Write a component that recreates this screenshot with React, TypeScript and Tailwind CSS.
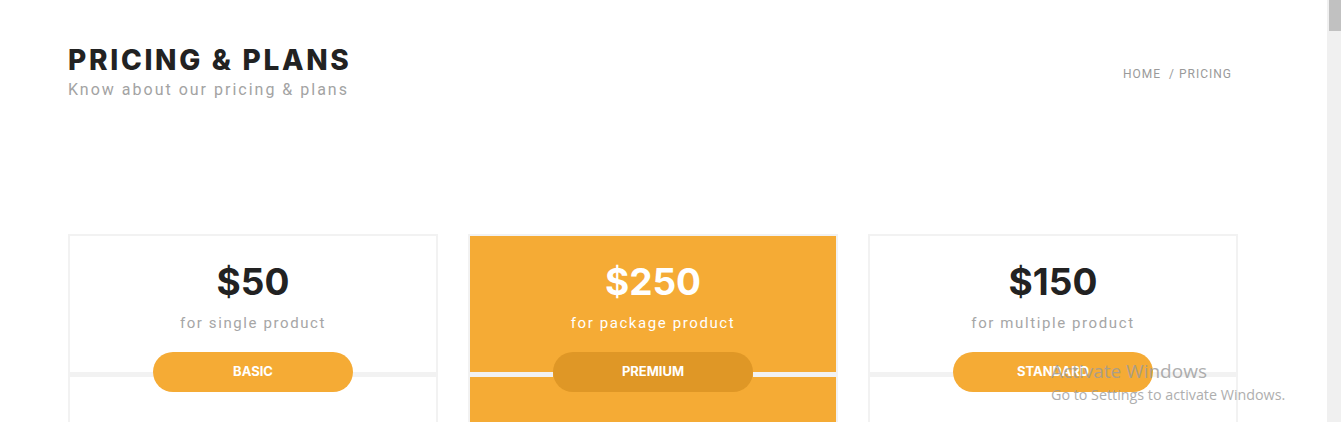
import React from "react";

const heading = { fontFamily: "Inter, 'Liberation Sans', sans-serif" };
const body = { fontFamily: "Roboto, 'Liberation Sans', sans-serif" };

type Plan = { price: string; note: string; label: string; featured?: boolean };

const plans: Plan[] = [
  { price: "$50", note: "for single product", label: "BASIC" },
  { price: "$250", note: "for package product", label: "PREMIUM", featured: true },
  { price: "$150", note: "for multiple product", label: "STANDARD" },
];

function Card({ plan }: { plan: Plan }) {
  const f = plan.featured;
  return (
    <div
      className={
        "h-[230px] border-2 border-[#f2f2f2] flex flex-col " +
        (f ? "bg-[#f5ab35]" : "bg-white")
      }
    >
      <div className="flex flex-col items-center pt-[24px]">
        <div
          style={heading}
          className={
            "text-[37px] leading-[44px] font-bold tracking-[0px] " +
            (f ? "text-white" : "text-[#222222]")
          }
        >
          {plan.price}
        </div>
        <div
          style={body}
          className={
            "mt-[10px] text-[15px] leading-[18px] tracking-[1.6px] " +
            (f ? "text-white" : "text-[#a6a6a6]")
          }
        >
          {plan.note}
        </div>
      </div>
      <div className="mt-[20px] flex items-center -mx-[2px]">
        <div className="flex-1 h-[5px] mt-[5px] bg-[#f2f2f2]" />
        <div
          style={heading}
          className={
            "w-[200px] h-[40px] rounded-full flex items-center justify-center text-white text-[13px] font-bold " +
            (f ? "bg-[#df9726]" : "bg-[#f5ab35]")
          }
        >
          {plan.label}
        </div>
        <div className="flex-1 h-[5px] mt-[5px] bg-[#f2f2f2]" />
      </div>
    </div>
  );
}

export default function App() {
  return (
    <div className="relative w-[1341px] h-[422px] overflow-hidden bg-white flex">
      <main className="flex-1 flex flex-col">
        <header className="flex justify-between items-start pl-[68px] pr-[95px] pt-[45px]">
          <div>
            <h1
              style={heading}
              className="text-[28px] leading-[30px] font-extrabold tracking-[2.7px] text-[#222222]"
            >
              PRICING &amp; PLANS
            </h1>
            <p
              style={body}
              className="mt-[5px] text-[16px] leading-[20px] tracking-[2px] text-[#a3a3a3]"
            >
              Know about our pricing &amp; plans
            </p>
          </div>
          <nav
            style={body}
            className="mt-[22px] text-[12px] leading-[14px] tracking-[1px] text-[#9a9a9a] flex gap-[8px]"
          >
            <span>HOME</span>
            <span>/ PRICING</span>
          </nav>
        </header>
        <section className="mt-[134px] ml-[68px] w-[1170px] grid grid-cols-3 gap-[30px]">
          {plans.map((p) => (
            <Card key={p.label} plan={p} />
          ))}
        </section>
      </main>
      <div className="w-[14px] bg-[#f0f0f0] flex flex-col items-end">
        <div className="w-[12px] h-[31px] bg-[#c1c1c1]" />
      </div>
      <div
        className="absolute left-[1051px] top-[358px] text-[#9b9b9b] opacity-80 pointer-events-none"
        style={{ fontFamily: "'Open Sans', 'Noto Sans', sans-serif" }}
      >
        <div className="text-[19px] leading-[26px]">Activate Windows</div>
        <div className="text-[14.3px] leading-[20px] mt-[1px]">Go to Settings to activate Windows.</div>
      </div>
    </div>
  );
}
